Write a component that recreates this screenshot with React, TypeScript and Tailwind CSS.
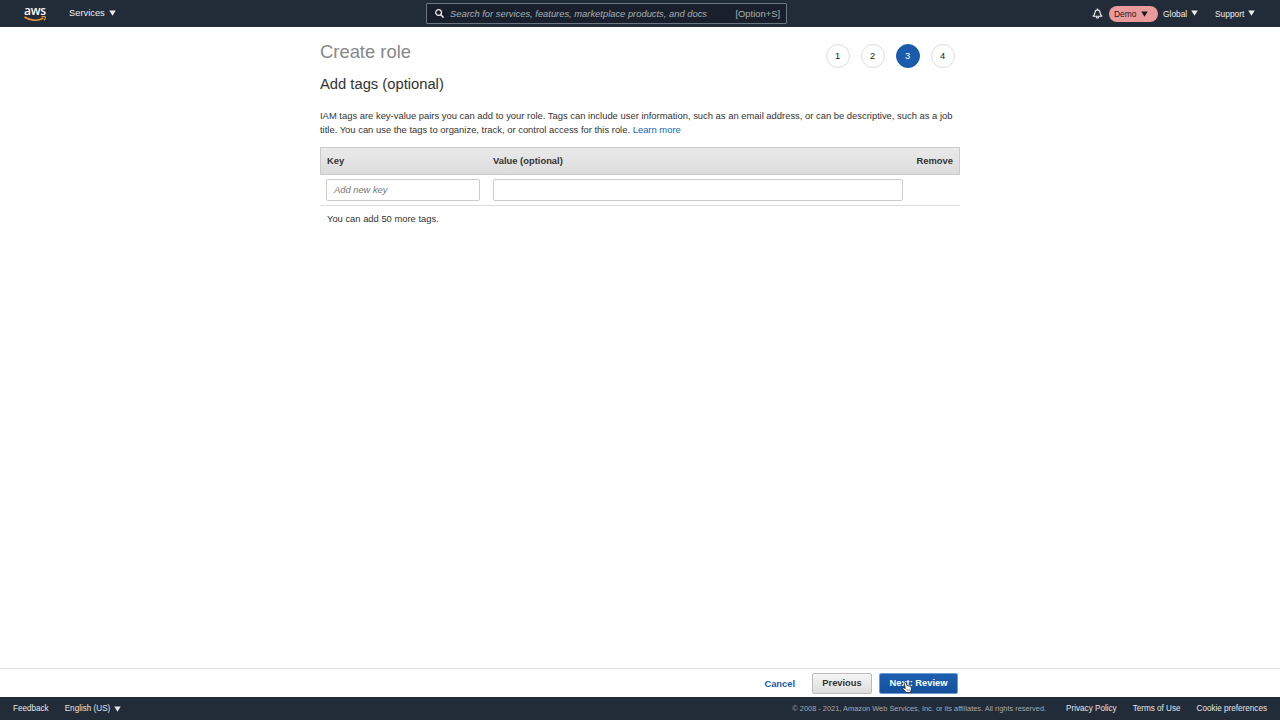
import type { ReactNode } from 'react';

function Caret({ className = '' }: { className?: string }) {
  return (
    <svg viewBox="0 0 8 6" className={`h-[6px] w-[7px] shrink-0 fill-current ${className}`} aria-hidden="true">
      <path d="M0.3 0.2H7.7L4 6Z" />
    </svg>
  );
}

function AwsLogo() {
  return (
    <div className="flex w-[22px] flex-col items-center">
      <span className="h-[10px] font-['Open_Sans',sans-serif] text-[12px] leading-[9px] font-semibold tracking-[-0.2px] text-white">
        aws
      </span>
      <svg viewBox="0 0 22 6" className="h-[6px] w-[22px]" fill="none" aria-hidden="true">
        <path d="M0.5 1C6 5 14 5.2 19.3 2.2" stroke="#e8963a" strokeWidth="1.6" />
        <path d="M17.4 0.8C19.2 0.4 20.8 0.4 21.2 0.9C21.6 1.5 21.1 3 20 4.3" stroke="#e8963a" strokeWidth="1.2" />
      </svg>
    </div>
  );
}

function Step({ n, active }: { n: number; active?: boolean }) {
  return (
    <div
      className={`flex size-[24px] items-center justify-center rounded-full border pt-px text-[9.33px] ${
        active ? 'border-[#1a5bab] bg-[#1a5bab] text-white' : 'border-[#dddddd] bg-white text-[#222222]'
      }`}
    >
      {n}
    </div>
  );
}

function FooterLink({ children, className = '' }: { children: ReactNode; className?: string }) {
  return <a className={`pt-px whitespace-nowrap text-[#e4e6e9] ${className}`}>{children}</a>;
}

function HandCursor() {
  return (
    <svg viewBox="0 0 12 14" className="absolute top-[7px] left-[22px] h-[13px] w-[10px]" aria-hidden="true">
      <path
        d="M3.2 1C4 0.4 4.9 1 5.1 1.8L5.9 4.5C6.6 4.1 7.3 4.4 7.6 5C8.3 4.7 9 5 9.3 5.6C10.1 5.3 10.9 5.8 11.1 6.7C11.5 8.4 11.4 9.8 10.7 11.2L10.6 13H4.9C4.4 11.6 2.9 10.5 1.2 8.7C0.4 7.7 1.4 6.8 2.4 7.3L4 8.4L2.8 2.4C2.6 1.8 2.8 1.3 3.2 1Z"
        fill="#ffffff"
        stroke="#111111"
        strokeWidth="0.9"
        strokeLinejoin="round"
      />
      <path d="M6.2 9V11.4M7.7 9V11.4M9.2 9V11.4" stroke="#333333" strokeWidth="0.5" />
    </svg>
  );
}

export default function App() {
  return (
    <div className="flex h-[720px] w-[1280px] flex-col overflow-hidden bg-white font-['Liberation_Sans',Arial,sans-serif] text-[9.33px] text-[#333333]">
      <header className="flex h-[27px] shrink-0 items-center bg-[#222b38] text-[9.33px] text-[#eeeeee]">
        <div className="w-[69px] pl-[24px]">
          <AwsLogo />
        </div>
        <div className="flex w-[357px] items-center gap-[4px]">
          <span className="pt-px">Services</span>
          <Caret />
        </div>
        <div className="flex h-[21px] w-[361px] items-center rounded-[1px] border border-[#6b7680] bg-[#1a202b] pr-[6px] pl-[8px] text-[#a5b0b5]">
          <svg viewBox="0 0 10 10" className="mr-[6px] size-[9px] text-[#eeeeee]" fill="none" stroke="currentColor" strokeWidth="1.4" aria-hidden="true">
            <circle cx="4" cy="4" r="3.2" />
            <path d="M6.4 6.4L9.5 9.5" strokeWidth="1.7" />
          </svg>
          <span className="flex-1 pt-px text-[9.37px] whitespace-nowrap italic">Search for services, features, marketplace products, and docs</span>
          <span className="pt-px text-[9.4px]">[Option+S]</span>
        </div>
        <div className="ml-auto flex items-center text-[8.4px]">
          <svg viewBox="0 0 12 12" className="mr-[6px] size-[11px]" fill="none" stroke="currentColor" strokeWidth="1.2" strokeLinejoin="round" aria-hidden="true">
            <path d="M6 0.6V2M1.2 9C2.8 7.4 3.1 6.3 3.3 4.8C3.5 3 4.5 2 6 2C7.5 2 8.5 3 8.7 4.8C8.9 6.3 9.2 7.4 10.8 9Z" />
            <path d="M4.5 9.4C4.7 11.5 7.3 11.5 7.5 9.4" />
          </svg>
          <div className="flex h-[16px] w-[49px] items-center gap-[5px] rounded-full bg-[#eb9a9b] pl-[5px] text-[#16191f]">
            <span className="pt-px">Demo</span>
            <Caret />
          </div>
          <div className="flex w-[57px] items-center gap-[4px] pl-[5px]">
            <span className="pt-px">Global</span>
            <Caret />
          </div>
          <div className="flex w-[65px] items-center gap-[4px]">
            <span className="pt-px">Support</span>
            <Caret />
          </div>
        </div>
      </header>

      <main className="mx-auto w-[640px] flex-1">
        <div className="flex justify-between">
          <div>
            <h1 className="mt-[13px] text-[18.4px] leading-[24px] text-[#888888]">Create role</h1>
            <h2 className="mt-[10px] text-[14.75px] leading-[20px] text-[#333333]">Add tags (optional)</h2>
          </div>
          <div className="mt-[17px] mr-[5.5px] flex gap-[11px]">
            <Step n={1} />
            <Step n={2} />
            <Step n={3} active />
            <Step n={4} />
          </div>
        </div>
        <p className="mt-[14.5px] text-[9.42px] leading-[14px] whitespace-nowrap">
          IAM tags are key-value pairs you can add to your role. Tags can include user information, such as an email address, or can be descriptive, such as a job
          <br />
          title. You can use the tags to organize, track, or control access for this role. <a className="text-[#1166bb]">Learn more</a>
        </p>
        <div className="mt-[10.5px] flex h-[28px] items-center border border-[#cccccc] bg-linear-to-b from-[#eaeaea] to-[#dcdcdc] px-[6px] pt-px text-[9.4px] font-bold">
          <span className="w-[166px]">Key</span>
          <span className="flex-1">Value (optional)</span>
          <span>Remove</span>
        </div>
        <div className="flex h-[31px] items-center gap-[13px] border-b border-[#dddddd] pl-[6px]">
          <div className="flex h-[22px] w-[154px] items-center rounded-[2px] border border-[#cccccc] pt-px pl-[7px] text-[#777777] italic">Add new key</div>
          <div className="h-[22px] w-[410px] rounded-[2px] border border-[#cccccc]" />
        </div>
        <p className="mt-[6px] pl-[7px] text-[9.4px] leading-[14px]">You can add 50 more tags.</p>
      </main>

      <div className="flex h-[29px] shrink-0 items-center justify-end border-t border-[#dddddd] pr-[322px] text-[9.33px] font-bold">
        <a className="mr-[17px] pt-[3px] text-[#1a5bab]">Cancel</a>
        <button className="mr-[7px] h-[21px] w-[60px] rounded-[2px] border border-[#bbbbbb] bg-linear-to-b from-[#f5f5f5] to-[#dddddd] pt-[2px] text-[#333333]">Previous</button>
        <button className="relative h-[21px] w-[79px] rounded-[2px] border border-[#6c9bd0] bg-linear-to-b from-[#1c5fb0] to-[#14509c] pt-[2px] text-white">
          Next: Review
          <HandCursor />
        </button>
      </div>

      <footer className="flex h-[23px] shrink-0 items-center bg-[#222b38] px-[13px] text-[8.15px]">
        <FooterLink>Feedback</FooterLink>
        <FooterLink className="mr-[4px] ml-[16px]">English (US)</FooterLink>
        <Caret className="text-[#e4e6e9]" />
        <span className="mr-[20px] ml-auto text-[7.42px] whitespace-nowrap text-[#a4a9b0]">© 2008 - 2021, Amazon Web Services, Inc. or its affiliates. All rights reserved.</span>
        <FooterLink className="mr-[16px]">Privacy Policy</FooterLink>
        <FooterLink className="mr-[16px]">Terms of Use</FooterLink>
        <FooterLink>Cookie preferences</FooterLink>
      </footer>
    </div>
  );
}
